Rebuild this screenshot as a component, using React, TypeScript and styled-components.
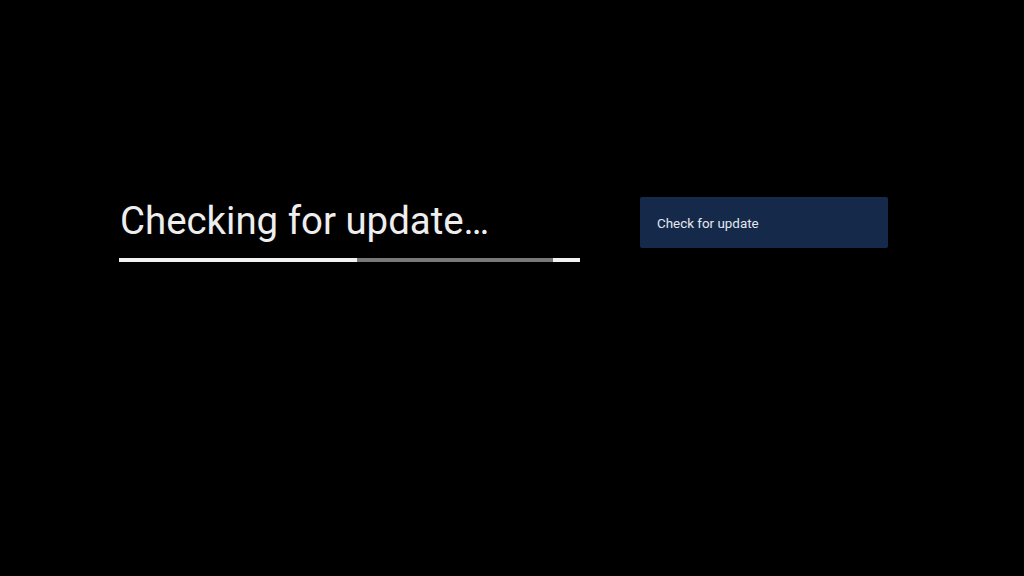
import styled, { createGlobalStyle } from "styled-components"

const GlobalStyle = createGlobalStyle`
  html, body {
    margin: 0;
    padding: 0;
    background: #000;
  }
  body {
    font-family: Roboto, "Noto Sans", sans-serif;
  }
`

const Screen = styled.main`
  width: 1024px;
  height: 576px;
  background: #000;
  display: flex;
  align-items: flex-start;
  padding: 197px 0 0 119px;
  box-sizing: border-box;
  gap: 60px;
`

const Status = styled.section`
  width: 461px;
  display: flex;
  flex-direction: column;
`

const Title = styled.h1`
  margin: 0;
  padding-left: 1px;
  font-size: 38.4px;
  font-weight: 400;
  line-height: 48px;
  color: #eeeeee;
  letter-spacing: 0;
`

const Progress = styled.div`
  margin-top: 13px;
  height: 4px;
  background: #787878;
  position: relative;
  overflow: hidden;
`

const Fill = styled.div<{ $left: number; $width: number }>`
  position: absolute;
  top: 0;
  bottom: 0;
  left: ${({ $left }) => $left}px;
  width: ${({ $width }) => $width}px;
  background: #f2f2f2;
`

const Button = styled.button`
  width: 248px;
  height: 51px;
  margin: 0;
  padding: 1px 0 0 17px;
  border: none;
  border-radius: 2px;
  background: #15294a;
  color: #e4e8ee;
  font-family: Roboto, "Noto Sans", sans-serif;
  font-size: 13.4px;
  text-align: left;
  cursor: pointer;
`

export default function App() {
  return (
    <>
      <GlobalStyle />
      <Screen>
        <Status>
          <Title>Checking for update…</Title>
          <Progress>
            <Fill $left={0} $width={238} />
            <Fill $left={434} $width={27} />
          </Progress>
        </Status>
        <Button>Check for update</Button>
      </Screen>
    </>
  )
}
